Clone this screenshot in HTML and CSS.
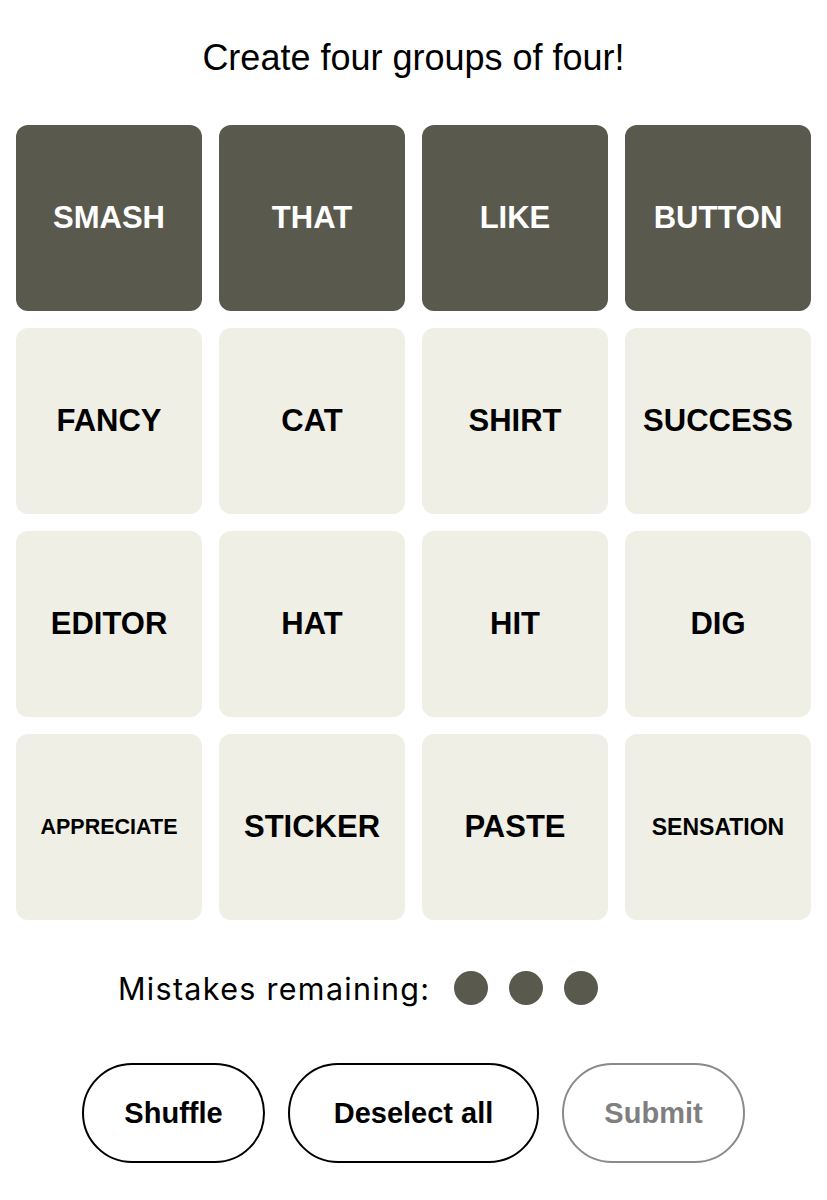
FILE: index.html
```html
<!DOCTYPE html>
<html>
<head>
<meta charset="utf-8">
<link rel="stylesheet" href="styles.css">
</head>
<body>
<main class="game">
  <h1 class="prompt">Create four groups of four!</h1>
  <div class="board">
    <div class="tile selected">SMASH</div>
    <div class="tile selected">THAT</div>
    <div class="tile selected">LIKE</div>
    <div class="tile selected">BUTTON</div>
    <div class="tile">FANCY</div>
    <div class="tile">CAT</div>
    <div class="tile">SHIRT</div>
    <div class="tile">SUCCESS</div>
    <div class="tile">EDITOR</div>
    <div class="tile">HAT</div>
    <div class="tile">HIT</div>
    <div class="tile">DIG</div>
    <div class="tile small-a">APPRECIATE</div>
    <div class="tile">STICKER</div>
    <div class="tile">PASTE</div>
    <div class="tile small-b">SENSATION</div>
  </div>
  <div class="mistakes">
    <span class="mistakes-label">Mistakes remaining:</span>
    <span class="dots"><span class="dot"></span><span class="dot"></span><span class="dot"></span></span>
  </div>
  <div class="actions">
    <button class="btn shuffle">Shuffle</button>
    <button class="btn deselect">Deselect all</button>
    <button class="btn submit" disabled>Submit</button>
  </div>
</main>
</body>
</html>
```

FILE: styles.css
```css
html, body {
  margin: 0;
  padding: 0;
  background: #ffffff;
}

.game {
  width: 827px;
  display: flex;
  flex-direction: column;
  align-items: center;
}

.prompt {
  margin: 36px 0 0 0;
  height: 44px;
  line-height: 44px;
  font-family: "Liberation Sans", Arial, sans-serif;
  font-weight: 400;
  font-size: 36px;
  color: #000;
}

.board {
  margin-top: 45px;
  display: grid;
  grid-template-columns: repeat(4, 186px);
  grid-auto-rows: 186px;
  column-gap: 17px;
  row-gap: 17px;
}

.tile {
  background: #efefe6;
  border-radius: 12px;
  display: flex;
  align-items: center;
  justify-content: center;
  font-family: "Liberation Sans", Arial, sans-serif;
  font-weight: 700;
  font-size: 31px;
  color: #000;
}

.tile.selected {
  background: #5a594e;
  color: #fff;
}

.tile.small-a {
  font-size: 21.5px;
}

.tile.small-b {
  font-size: 23px;
}

.mistakes {
  align-self: flex-start;
  margin-top: 48px;
  padding-left: 118px;
  display: flex;
  align-items: center;
  height: 40px;
}

.mistakes-label {
  font-family: Inter, "Liberation Sans", sans-serif;
  font-size: 30.5px;
  letter-spacing: 1.3px;
  color: #000;
}

.dots {
  display: flex;
  gap: 21px;
  margin-left: 24px;
}

.dot {
  width: 34px;
  height: 34px;
  border-radius: 50%;
  background: #5a594e;
}

.actions {
  margin-top: 55px;
  display: flex;
  gap: 23px;
}

.btn {
  height: 100px;
  border-radius: 50px;
  border: 2px solid #000;
  background: #fff;
  font-family: "Liberation Sans", Arial, sans-serif;
  font-weight: 700;
  font-size: 29px;
  color: #000;
  padding: 0;
}

.shuffle { width: 183px; }
.deselect { width: 251px; }
.submit {
  width: 183px;
  border-color: #8a8a8a;
  color: #7f7f7f;
}
```
